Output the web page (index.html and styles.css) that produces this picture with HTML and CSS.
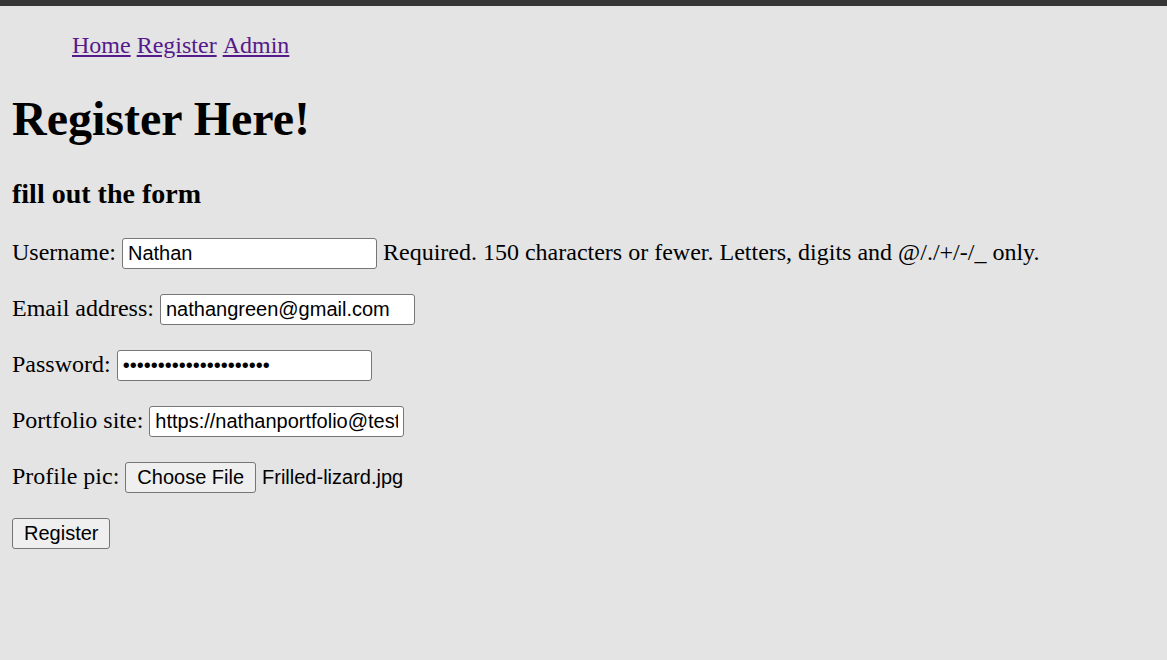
FILE: index.html
```html
<!DOCTYPE html>
<html lang="en">
<head>
<meta charset="utf-8">
<title>Register</title>
<link rel="stylesheet" href="styles.css">
</head>
<body>
<ul class="nav">
  <li><a href="#">Home</a></li>
  <li><a href="#">Register</a></li>
  <li><a href="#">Admin</a></li>
</ul>
<h1 class="title">Register Here!</h1>
<h3 class="subtitle">fill out the form</h3>
<form class="form">
  <p class="row"><label>Username:</label> <input class="field" type="text" value="Nathan"> <span class="help">Required. 150 characters or fewer. Letters, digits and @/./+/-/_ only.</span></p>
  <p class="row"><label>Email address:</label> <input class="field" type="email" value="nathangreen@gmail.com"></p>
  <p class="row"><label>Password:</label> <input class="field" type="password" value="nathangreenpassword12"></p>
  <p class="row"><label>Portfolio site:</label> <input class="field" type="text" value="https://nathanportfolio@test.com"></p>
  <p class="row"><label>Profile pic:</label> <button type="button" class="btn">Choose File</button><span class="filename">Frilled-lizard.jpg</span></p>
  <p class="row"><button type="button" class="btn">Register</button></p>
</form>
</body>
</html>
```
FILE: styles.css
```css
html {
  background: #e4e4e4;
  border-top: 6px solid #363636;
}
body {
  margin: 12px;
  font-family: "Liberation Serif", "Times New Roman", serif;
  font-size: 24px;
  color: #000;
}
.nav {
  margin: 14px 0 24px;
  padding-left: 60px;
  list-style: none;
}
.nav li {
  display: inline;
}
.nav a {
  color: #551a8b;
  text-decoration: underline;
}
.title {
  font-size: 48px;
  margin: 32px 0;
}
.subtitle {
  font-size: 28px;
  margin: 28px 0;
}
.row {
  margin: 25px 0;
}
.field {
  box-sizing: border-box;
  width: 255px;
  height: 31px;
  padding: 1px 5px;
  border: 1px solid #767676;
  border-radius: 3px;
  background: #fff;
  font-family: "Liberation Sans", Arial, sans-serif;
  font-size: 20px;
  color: #000;
  vertical-align: baseline;
}
.btn {
  box-sizing: border-box;
  height: 31px;
  padding: 1px 11px;
  border: 1px solid #767676;
  border-radius: 3px;
  background: #efefef;
  font-family: "Liberation Sans", Arial, sans-serif;
  font-size: 20px;
  color: #000;
}
.filename {
  margin-left: 6px;
  font-family: "Liberation Sans", Arial, sans-serif;
  font-size: 20px;
}
```
